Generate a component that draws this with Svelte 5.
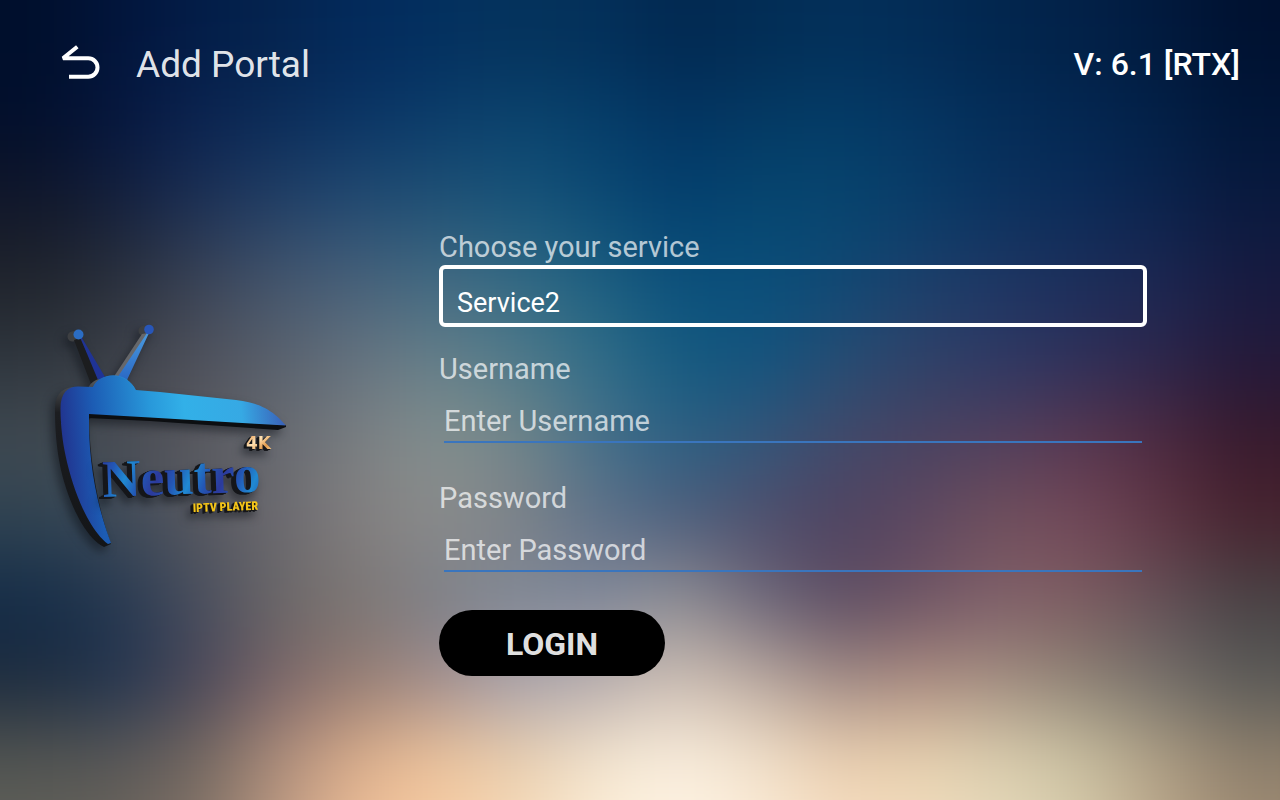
<script lang="ts">
    let service: string = "Service2";
    let username: string = "";
    let password: string = "";

    // colour samples of the backdrop, left to right, top to bottom
    const backdrop: string[][] = [
        ["000f2c", "02153c", "031d48", "04244f", "032a5c", "03305f", "05335c", "03305a", "022850", "022d55", "03305a", "032c56", "02264e", "022148", "011a3e", "001130"],
        ["020f2c", "06173f", "0b2350", "0b2d5a", "0b3565", "0b3d6b", "0b446e", "053e6a", "033462", "043a64", "043c67", "053562", "042d58", "032752", "022148", "011638"],
        ["11172a", "14203d", "1c3055", "213f66", "214a72", "1f5175", "17547a", "0c4a74", "033f6e", "06466f", "07456f", "083c68", "0b325f", "0b2b58", "0b234d", "09193e"],
        ["20242c", "2a303c", "3a4356", "44566e", "47617a", "426a82", "336a84", "1c5f80", "0b4f7b", "0a4f7a", "104874", "1c3f6b", "1d3663", "1c2e5a", "1c2752", "171b40"],
        ["2f363e", "3c4048", "50525c", "5a626e", "667480", "66808a", "507a8a", "306d88", "145a80", "12547e", "254d74", "2f4269", "2d3864", "2f305a", "2c264c", "24193a"],
        ["404a52", "4b4e55", "5a5a60", "676a70", "7c8083", "84908f", "728588", "46708a", "2c6083", "34567a", "43496a", "4a4260", "533f5c", "59374f", "4e2a40", "381a2c"],
        ["2f4352", "3f4b5a", "57585f", "6c6a70", "848080", "8c8c8c", "7e8288", "5f7088", "4f5e7c", "504f6c", "4f4260", "5f4860", "72505c", "73495a", "5f3644", "48232f"],
        ["142c48", "263850", "484e5e", "6a6767", "7c7674", "7c8088", "7f8896", "80889a", "929094", "6c677a", "5c4c62", "6e5464", "80606a", "7c5c60", "645058", "484345"],
        ["1c2b3e", "223450", "4a4658", "7a6468", "967c72", "a28c8c", "aaa4ae", "b8acac", "d0c0b4", "bcaa9f", "a08a84", "ac8c80", "a28e80", "8c8274", "74706a", "5a5a58"],
        ["545652", "5a5857", "74685f", "b08f7c", "deb08c", "f0c69c", "eacfae", "f5e6cf", "fbf0df", "f3e2cb", "ecd0b0", "e9d3b0", "dcd0b0", "ccc2a2", "b09f84", "8f806c"],
        ["60605a", "6a645c", "84746a", "c09c84", "f0c09a", "f8cca4", "f6dcbc", "fceed8", "fff4e6", "fbecd8", "f6dcc0", "f4dec0", "e6dabc", "d8ccac", "bca88c", "a08c74"]
    ];

    // the outer cells run past the edge so that the blur has something to take in
    const start = (i: number) => i == 0 ? -160 : i * 80;
    const size = (i: number, last: number) => i == 0 || i == last ? 241 : 81;

    const login = (e: Event) => {
        e.preventDefault();
    };
</script>

<div class="screen">
    <svg class="backdrop" viewBox="0 0 1280 800" preserveAspectRatio="none" aria-hidden="true">
        <defs>
            <filter id="soft" filterUnits="userSpaceOnUse" x="-160" y="-160" width="1600" height="1120" color-interpolation-filters="sRGB">
                <feGaussianBlur stdDeviation="40" />
            </filter>
        </defs>
        <g filter="url(#soft)">
            {#each backdrop as row, y}
                {#each row as color, x}
                    <rect x={start(x)} y={start(y)} width={size(x, 15)} height={size(y, 10)} fill="#{color}" />
                {/each}
            {/each}
        </g>
    </svg>

    <header>
        <button class="back" type="button" aria-label="Back">
            <svg viewBox="0 0 40 40" width="40" height="40">
                <path d="M17.300 2.700 L3 14.300 H28.300 A9.200 9.200 0 0 1 28.300 32.700 H9" fill="none" stroke="#fff" stroke-width="4" stroke-linejoin="bevel" />
            </svg>
        </button>
        <h1>Add Portal</h1>
        <span class="version">V: 6.1 [RTX]</span>
    </header>

    <main>
        <div class="logo">
            <svg viewBox="40 310 250 250" width="250" height="250" role="img" aria-label="Neutro 4K IPTV Player">
                <defs>
                    <linearGradient id="body" gradientUnits="userSpaceOnUse" x1="60" y1="420" x2="286" y2="400">
                        <stop offset="0" stop-color="#21348f" />
                        <stop offset="0.15" stop-color="#1c5cb4" />
                        <stop offset="0.4" stop-color="#2898da" />
                        <stop offset="0.55" stop-color="#32b0e8" />
                        <stop offset="0.8" stop-color="#36a9e4" />
                        <stop offset="1" stop-color="#3a5cb5" />
                    </linearGradient>
                    <linearGradient id="leg" gradientUnits="userSpaceOnUse" x1="60" y1="420" x2="94" y2="417">
                        <stop offset="0" stop-color="#21348f" />
                        <stop offset="1" stop-color="#1c5cb4" />
                    </linearGradient>
                    <linearGradient id="dome" x1="0" y1="0" x2="1" y2="0">
                        <stop offset="0" stop-color="#1d66ba" />
                        <stop offset="1" stop-color="#2a93d8" />
                    </linearGradient>
                    <linearGradient id="rod" x1="0" y1="0" x2="0" y2="1">
                        <stop offset="0" stop-color="#4a9ade" />
                        <stop offset="1" stop-color="#2a68c4" />
                    </linearGradient>
                    <linearGradient id="side" x1="0" y1="0" x2="0" y2="1">
                        <stop offset="0" stop-color="#55585c" />
                        <stop offset="0.2" stop-color="#1c1d20" />
                        <stop offset="1" stop-color="#131518" />
                    </linearGradient>
                    <linearGradient id="name" gradientUnits="userSpaceOnUse" x1="104" y1="452" x2="132" y2="464" spreadMethod="reflect">
                        <stop offset="0" stop-color="#2c3a9c" />
                        <stop offset="0.5" stop-color="#2356b4" />
                        <stop offset="1" stop-color="#2089d2" />
                    </linearGradient>
                    <linearGradient id="gold" x1="0" y1="0" x2="1" y2="1">
                        <stop offset="0" stop-color="#e08a3c" />
                        <stop offset="0.4" stop-color="#ffe2b4" />
                        <stop offset="0.7" stop-color="#e39a4c" />
                        <stop offset="1" stop-color="#fbd9a0" />
                    </linearGradient>
                </defs>

                <g class="cast">
                    <path fill="#3d3f42" d="M72 331.500 L78.500 329.500 L80 340 L73 341.500 A5 5 0 0 1 72 331.500Z" />
                    <path fill="#1c1d1f" d="M74 340 L80 338 L100 379 L91 384Z" />
                    <path fill="#1f3396" d="M80 337 L82 338 L105 377 L98 380Z" />
                    <circle cx="78.500" cy="334.500" r="5" fill="#2b6dc4" />
                    <path fill="#3d3f42" d="M142 326 L149 324.500 L149 334.500 L142 335.500 A5 5 0 0 1 142 326Z" />
                    <path fill="#66676a" d="M142 334 L148 333 L120 378 L113 378Z" />
                    <path fill="url(#rod)" d="M147 333 L149 333 L127 380 L117 378Z" />
                    <circle cx="149" cy="329.500" r="4.800" fill="#2856b8" />

                    <path fill="url(#side)" d="M55 410 C55 396 60 389 72 387 L88 388 C91 382 97 379 100 379 L112 392 L89 420 C90 465 99 512 111 544 L104 547 C86 538 71 507 63 478 C57 455 55 432 55 410Z" />
                    <path fill="#0c0e11" d="M89 413 L286 425 L286 427 L278 430 L150 421 L88 418Z" />
                    <path fill="url(#dome)" d="M92 390 C98 371 128 369 136 392Z" />
                    <path fill="url(#body)" d="M60.500 410 C60 394 67 386.500 78 386.500 L93 387 C99 372 127 372 136 390 L160 392 L236 400 C262 403 274 412 286 425.500 L150 417.500 L89 414 L89 424 L61.200 424 C60.700 419 60.500 414 60.500 410Z" />
                    <path fill="url(#leg)" d="M61 423 L89 423 C89 466 98 509 111 543 L108 544 C91 531 77 500 69 470 C64 451 62 437 61 423Z" />
                </g>

                <g class="letters deep">
                    <text class="name" x="103" y="497" fill="url(#name)" transform="rotate(-2 103 497)">Neutro</text>
                </g>
                <g class="letters">
                    <text class="quality" x="246" y="449" fill="url(#gold)">4K</text>
                    <text class="tagline" x="193" y="512" fill="#f5c518" transform="rotate(-2 193 512)">IPTV PLAYER</text>
                </g>
            </svg>
        </div>

        <form on:submit={login}>
            <label for="service">Choose your service</label>
            <select id="service" bind:value={service}>
                <option>Service2</option>
            </select>

            <label for="username">Username</label>
            <input id="username" type="text" placeholder="Enter Username" bind:value={username} />

            <label for="password">Password</label>
            <input id="password" type="password" placeholder="Enter Password" bind:value={password} />

            <button class="login" type="submit">LOGIN</button>
        </form>
    </main>
</div>

<style>
    :global(body) {
        margin: 0;
        background: #02264e;
    }

    .screen {
        position: relative;
        min-height: 100vh;
        overflow: hidden;
        font-family: Roboto, "Liberation Sans", sans-serif;
    }

    .backdrop {
        position: absolute;
        inset: 0;
        width: 100%;
        height: 100%;
    }

    header {
        position: relative;
        display: flex;
        align-items: center;
        height: 128px;
        padding: 0 40px 0 60px;
    }

    h1 {
        margin: 0 0 0 36px;
        font-size: 37px;
        font-weight: 400;
        color: rgba(255, 255, 255, 0.9);
    }

    .back {
        padding: 0;
        border: none;
        background: transparent;
        cursor: pointer;
    }

    .back svg {
        display: block;
    }

    .version {
        margin-left: auto;
        font-size: 32px;
        font-weight: 500;
        color: #fff;
    }

    main {
        position: relative;
        display: flex;
        align-items: flex-start;
        padding: 102px 133px 64px 40px;
    }

    .logo {
        flex: none;
        width: 399px;
        padding-top: 80px;
    }

    .logo svg {
        display: block;
    }

    .cast {
        filter: drop-shadow(-4px 5px 5px rgba(10, 14, 20, 0.5));
    }

    .letters {
        filter: drop-shadow(-1px 1px 0 #15161a) drop-shadow(-2px 1px 0 #15161a) drop-shadow(-3px 5px 4px rgba(10, 14, 20, 0.5));
    }

    .letters.deep {
        filter: drop-shadow(-1px 0 0 #15161a) drop-shadow(-2px 1px 0 #15161a) drop-shadow(-2px 1px 0 #15161a) drop-shadow(-3px 6px 4px rgba(10, 14, 20, 0.5));
    }

    .name {
        font-family: "Liberation Serif", serif;
        font-size: 53px;
        font-weight: 700;
    }

    .quality {
        font-family: "DejaVu Sans", sans-serif;
        font-size: 17px;
        font-weight: 700;
    }

    .tagline {
        font-family: "Roboto Condensed", Roboto, sans-serif;
        font-size: 12px;
        font-weight: 900;
    }

    form {
        flex: 1;
        min-width: 0;
        display: flex;
        flex-direction: column;
    }

    label {
        font-size: 29px;
        line-height: 34px;
        color: rgba(255, 255, 255, 0.7);
    }

    select {
        appearance: none;
        box-sizing: border-box;
        height: 62px;
        margin: 1px 0 25px;
        padding: 14px 14px 0;
        border: 4px solid #fff;
        border-radius: 6px;
        outline: none;
        background: transparent;
        font-family: inherit;
        font-size: 27px;
        color: #fff;
    }

    option {
        color: #000;
    }

    input {
        box-sizing: border-box;
        height: 48px;
        margin: 9px 5px 38px;
        padding: 6px 0 0;
        border: none;
        border-bottom: 2px solid #3a75bd;
        border-radius: 0;
        outline: none;
        background: transparent;
        font-family: inherit;
        font-size: 29px;
        color: #fff;
    }

    input::placeholder {
        color: rgba(255, 255, 255, 0.7);
        opacity: 1;
    }

    .login {
        align-self: flex-start;
        width: 226px;
        height: 66px;
        padding: 2px 0 0;
        border: none;
        border-radius: 33px;
        background: #000;
        font-family: inherit;
        font-size: 32px;
        font-weight: 700;
        color: rgba(255, 255, 255, 0.9);
        cursor: pointer;
    }
</style>
